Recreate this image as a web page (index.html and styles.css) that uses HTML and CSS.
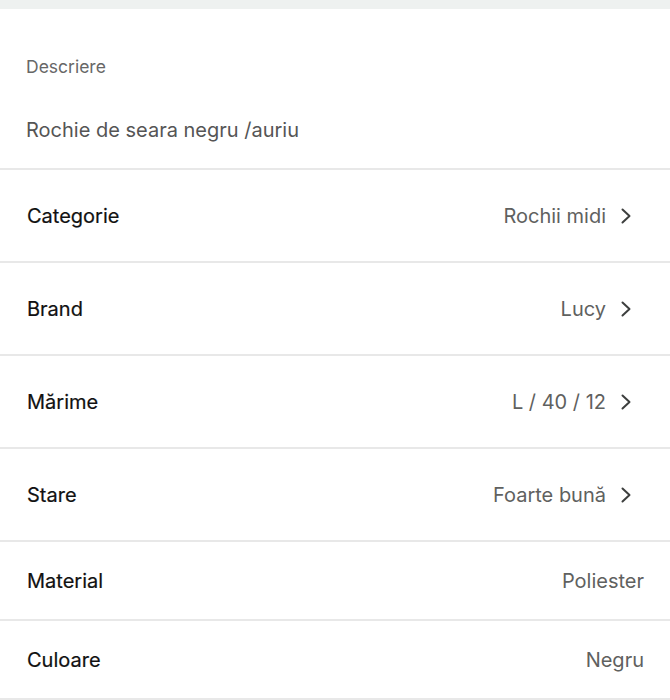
FILE: index.html
```html
<!DOCTYPE html>
<html lang="ro">
<head>
<meta charset="utf-8">
<link rel="stylesheet" href="styles.css">
</head>
<body>
<div class="topband"></div>
<section class="desc">
  <div class="desc-label">Descriere</div>
  <div class="desc-text">Rochie de seara negru /auriu</div>
</section>
<ul class="list">
  <li class="row nav"><span class="label">Categorie</span><span class="value">Rochii midi<svg class="chev" viewBox="0 0 12 18"><path d="M2.5 2.5 L9.5 9 L2.5 15.5"/></svg></span></li>
  <li class="row nav"><span class="label">Brand</span><span class="value">Lucy<svg class="chev" viewBox="0 0 12 18"><path d="M2.5 2.5 L9.5 9 L2.5 15.5"/></svg></span></li>
  <li class="row nav"><span class="label">Mărime</span><span class="value">L / 40 / 12<svg class="chev" viewBox="0 0 12 18"><path d="M2.5 2.5 L9.5 9 L2.5 15.5"/></svg></span></li>
  <li class="row nav"><span class="label">Stare</span><span class="value">Foarte bună<svg class="chev" viewBox="0 0 12 18"><path d="M2.5 2.5 L9.5 9 L2.5 15.5"/></svg></span></li>
  <li class="row plain"><span class="label">Material</span><span class="value">Poliester</span></li>
  <li class="row plain"><span class="label">Culoare</span><span class="value">Negru</span></li>
</ul>
</body>
</html>
```
FILE: styles.css
```css
* { box-sizing: border-box; }
html, body { margin: 0; padding: 0; background: #fff; }
body {
  font-family: Inter, Roboto, "Liberation Sans", sans-serif;
  width: 670px;
  color: #111;
}
.topband {
  height: 9px;
  background: #eef1f0;
}
.desc {
  height: 161px;
  padding: 0 26px;
  display: flex;
  flex-direction: column;
  border-bottom: 2px solid #e8e8e8;
}
.desc-label {
  margin-top: 46px;
  font-size: 17.5px;
  line-height: 23px;
  color: #676767;
}
.desc-text {
  margin-top: 39px;
  font-size: 20px;
  line-height: 26px;
  color: #555;
}
.list { list-style: none; margin: 0; padding: 0; }
.row {
  display: flex;
  align-items: center;
  justify-content: space-between;
  padding: 0 26px 0 27px;
  border-bottom: 2px solid #e8e8e8;
}
.row.nav { height: 93px; }
.row.plain { height: 79px; }
.label {
  font-size: 20px;
  color: #111;
  -webkit-text-stroke: 0.2px #111;
}
.value {
  display: flex;
  align-items: center;
  font-size: 20px;
  color: #5f6160;
}
.chev {
  width: 12px;
  height: 18px;
  margin-left: 14px;
  margin-right: 12px;
  fill: none;
  stroke: #3d3f3e;
  stroke-width: 2;
  stroke-linecap: round;
  stroke-linejoin: round;
}
```
